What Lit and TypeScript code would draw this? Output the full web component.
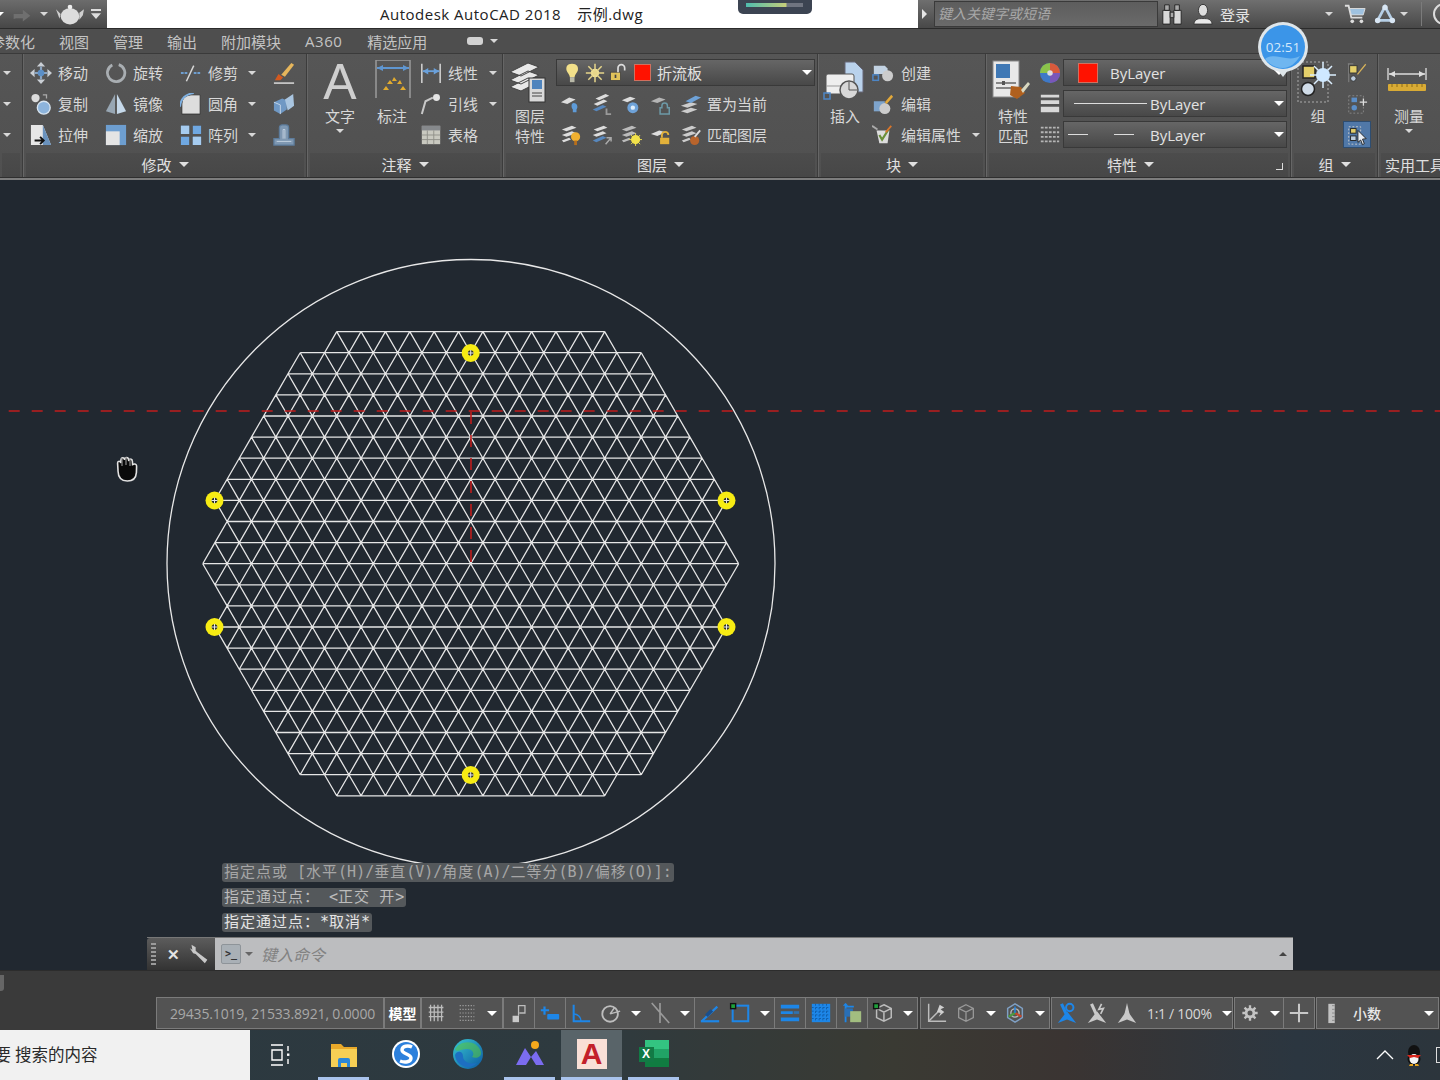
import { LitElement, css, html, svg, nothing } from 'lit';
import { customElement } from 'lit/decorators.js';

const B = '#1d86e8';

// small ribbon and status icons, 24x24
const ICONS: Record<string, unknown> = {
  move: svg`<path d="M12 0l4.500 5h-9zM12 24l-4.500-5h9zM0 12l5-4.500v9zM24 12l-5 4.500v-9z" fill="#c9ced4"/><path d="M12 5v14M5 12h14" stroke="#8aa4c0" stroke-width="2.400"/><circle cx="12" cy="12" r="3.600" fill="#5b8fc7"/>`,
  rotate: svg`<path d="M15 2.800A9.500 9.500 0 1 1 8 3.300" fill="none" stroke="#a9aeb2" stroke-width="3"/>`,
  trim: svg`<path d="M1 12h8M15 12h8" stroke="#6f9fd0" stroke-width="2" stroke-dasharray="3 1"/><path d="M7 21L15 4" stroke="#d8d8d8" stroke-width="1.600"/>`,
  brush: svg`<path d="M9 14L20 1l3 2-10 13z" fill="#e6b65c"/><path d="M6 13l5 4-3 3H2z" fill="#d3591f"/><path d="M1 23h22" stroke="#ddd" stroke-width="1.600"/>`,
  copy: svg`<circle cx="6" cy="5.500" r="4.500" fill="#dcdcdc"/><path d="M14 2h4v4" fill="none" stroke="#aaa" stroke-width="1.400"/><circle cx="15" cy="16" r="7" fill="#8db4dc" stroke="#d8e4ef" stroke-width="1.500"/>`,
  mirror: svg`<path d="M11 1L1 20l10 3z" fill="#98a7b4"/><path d="M13 1l10 19-10 3z" fill="#c6d9ea"/>`,
  fillet: svg`<path d="M2 23V12Q2 3 12 2h10v21z" fill="#ddd" stroke="#333" stroke-width="1"/><path d="M0 15Q1 2 15 0" fill="none" stroke="#7fb0e0" stroke-width="2.200"/>`,
  solid: svg`<path d="M1 10l9-4 5 2v10l-7 5-7-4z" fill="#6f98c4"/><path d="M13 7l9-6 1 13-7 5z" fill="#a9c5e0"/><path d="M1 10l7 3v10" stroke="#c7d8e8" fill="none"/>`,
  stretch: svg`<path d="M1 1h13l9 22H1z" fill="#e6e6e6"/><path d="M14 1l9 22h-9z" fill="#6a92bd"/><path d="M5 18h10M11 14l4 4-4 4" stroke="#111" stroke-width="2" fill="none"/>`,
  scale: svg`<rect x="1" y="1" width="22" height="22" fill="#6d9ed0"/><rect x="1" y="8" width="15" height="15" fill="#e4e4e4"/>`,
  array: svg`<path d="M1 2h9v9H1zM14 2h9v9h-9zM1 14h9v9H1zM14 14h9v9h-9z" fill="#6fa8e2"/><path d="M1 2h9v9H1zM14 14h9v9h-9z" fill="#a6ccf0"/>`,
  offset: svg`<path d="M1 23v-7h6V4a3 3 0 0 1 3-3h4a3 3 0 0 1 3 3v12h6v7z" fill="#7f98b2" stroke="#5d7c9c" stroke-width="1.400"/><path d="M4 19h16M11 16V6h2v10" stroke="#c6d4e2" fill="none"/>`,
  dim: svg`<path d="M2 2v21M22 2v21" stroke="#d8d8d8" stroke-width="1.600"/><path d="M3 10h18" stroke="#6aa0da" stroke-width="2"/><path d="M3 10l6-3.500v7zM21 10l-6-3.500v7z" fill="#6aa0da"/>`,
  leader: svg`<path d="M2 23l4-14 8-4" stroke="#c8c8c8" stroke-width="2.200" fill="none"/><circle cx="18" cy="5" r="3.800" fill="#e5e5e5"/>`,
  table: svg`<rect x="2" y="2" width="20" height="20" fill="#c9c9c0"/><rect x="2" y="2" width="20" height="5" fill="#86898c"/><path d="M2 12h20M2 17h20M8 7v15M15 7v15" stroke="#8f8f88"/>`,
  l1: svg`<path d="M1 10l9-5 7 2-9 5z" fill="#ddd"/><path d="M15 11c4 0 5 5 3 7v3h-4v-3c-2-2-2-7 1-7z" fill="#5e9bd8"/>`,
  l2: svg`<path d="M6 6l11-5 4 2-11 5zM4 12l11-5 4 2-11 5z" fill="#ddd"/><path d="M3 18l11-5 4 2-11 5z" fill="#5787bd"/><path d="M18 17v6h5" stroke="#999" stroke-width="2" fill="none"/>`,
  l3: svg`<path d="M2 8l9-4 6 2-9 4z" fill="#ddd"/><circle cx="14" cy="16" r="6" fill="#6ea2d8"/><circle cx="14" cy="16" r="2.400" fill="#dfeefb"/>`,
  l4: svg`<path d="M1 9l9-4 7 2-9 4z" fill="#b5b5b5"/><path d="M13 14a3 3 0 0 1 6 0v2h2v7h-10v-7h2z" fill="none" stroke="#6d9aa8" stroke-width="1.600"/>`,
  l5: svg`<path d="M1 14l11-4 7 2-11 4zM1 20l11-4 7 2-11 4z" fill="#ccc"/><path d="M6 9l11-6 6 2-11 6z" fill="#6ea2d8"/>`,
  l6: svg`<path d="M2 6l11-4 5 2-11 4zM2 12l11-4 5 2-11 4zM2 18l8-3 2 2-8 3z" fill="#ddd"/><circle cx="17" cy="14" r="5" fill="#f0b030"/><path d="M15.500 18h3v5h-3z" fill="#b86f1c"/>`,
  l7: svg`<path d="M4 6l11-4 4 2-11 4zM3 12l11-4 4 2-11 4z" fill="#ddd"/><path d="M3 18l11-5 4 2-11 5z" fill="#5787bd"/><path d="M23 15l-6 7M18 15h5v4" stroke="#aaa" stroke-width="1.600" fill="none"/>`,
  l8: svg`<path d="M2 6l11-4 5 2-11 4zM2 12l11-4 5 2-11 4zM2 18l8-3 2 2-8 3z" fill="#bbb"/><circle cx="17" cy="17" r="5" fill="#f2e24a"/><path d="M17 10v14M10 17h14M12 12l10 10M22 12L12 22" stroke="#f2e24a"/>`,
  l9: svg`<path d="M1 11l9-4 7 2-9 4z" fill="#ddd"/><rect x="11" y="15" width="10" height="7" fill="#e2b13a"/><path d="M13 15v-3a3 3 0 0 1 7 0" fill="none" stroke="#e2b13a" stroke-width="2"/>`,
  l10: svg`<path d="M2 6l11-4 5 2-11 4zM2 12l11-4 5 2-11 4zM2 18l8-3 2 2-8 3z" fill="#ccc"/><circle cx="16" cy="18" r="5" fill="#b8642c"/><path d="M16 14l6-7" stroke="#ddd" stroke-width="2"/>`,
  create: svg`<path d="M2 4h12l3 3v6H2z" fill="#c2d2e2"/><circle cx="17" cy="15" r="6" fill="#ccc"/><rect x="1" y="14" width="6" height="6" fill="none" stroke="#4d86c6" stroke-width="1.600"/>`,
  edit: svg`<path d="M2 9h12v11H2z" fill="#7ea4cc"/><circle cx="14" cy="17" r="6" fill="#ccc"/><path d="M14 10l7-8 2 2-7 8z" fill="#e3a93a"/>`,
  attr: svg`<path d="M5 7h14l-2 14H8z" fill="#ddd"/><path d="M8 12l3 5 7-11" stroke="#6a8f3a" stroke-width="2.400" fill="none"/><path d="M0 2l6 4" stroke="#aaa" stroke-width="2"/><path d="M15 9l6-7" stroke="#d8762b" stroke-width="2"/>`,
  wheel: svg`<circle cx="12" cy="12" r="11" fill="#3f79c7"/><path d="M12 12V1A11 11 0 0 1 23 12z" fill="#d85a3b"/><path d="M12 12H23A11 11 0 0 1 12 23z" fill="#7a57b8"/><path d="M12 12H1A11 11 0 0 1 12 1z" fill="#8bc24a"/><circle cx="12" cy="12" r="3" fill="#ddd"/>`,
  weight: svg`<path d="M2 2h20v3H2zM2 8h20v4H2zM2 15h20v6H2z" fill="#d8d8d8"/>`,
  ltype: svg`<path d="M2 4h20M2 9h20M2 14h20M2 19h20" stroke="#b5b5b5" stroke-width="2" stroke-dasharray="3 1.400"/>`,
  g1: svg`<path d="M2 2h6M3 2v20" stroke="#888" fill="none"/><rect x="4" y="4" width="8" height="8" fill="#e4cf6a" stroke="#333"/><circle cx="8" cy="18" r="3" fill="#bcd" stroke="#333"/><path d="M12 13L21 2l1 1-9 11z" fill="#d9b45a"/>`,
  g2: svg`<rect x="3" y="3" width="16" height="19" fill="none" stroke="#888" stroke-dasharray="2 2"/><rect x="6" y="5" width="6" height="5" fill="#5b8ec8"/><circle cx="9" cy="16" r="3" fill="#5b8ec8"/><path d="M15 10h8M19 6v8" stroke="#ddd" stroke-width="1.400"/>`,
  g3: svg`<rect x="3" y="3" width="13" height="19" fill="none" stroke="#ccc" stroke-dasharray="2 2"/><rect x="5" y="5" width="6" height="5" fill="#e4cf6a" stroke="#222"/><rect x="5" y="13" width="6" height="5" fill="#bcd" stroke="#222"/><path d="M13 7l9 9-4 .5 2 5-2 1-2-5-3 2.500z" fill="#e9eef4" stroke="#222"/>`,
  grid: svg`<path d="M5 3v18M9 3v18M13 3v18M17 3v18M3 6h16M3 11h16M3 16h16" stroke="#bcbcbc" stroke-width="1.400"/>`,
  snap: svg`<path d="M4 4h16M4 8h16M4 12h16M4 16h16M4 20h16" stroke="#9c9c9c" stroke-width="1.300" stroke-dasharray="1.400 1.600"/>`,
  note: svg`<rect x="5" y="15" width="7" height="7" fill="#c9c9c9"/><path d="M11.500 15V4h7v8h-6" fill="none" stroke="#bdbdbd" stroke-width="1.400"/>`,
  plusbar: svg`<path d="M6 5v9M2 9h9" stroke="${B}" stroke-width="2.400"/><rect x="9" y="13" width="13" height="6" rx="1" fill="${B}"/>`,
  ortho: svg`<path d="M4 3v18h18" stroke="${B}" stroke-width="2.200" fill="none"/><path d="M4 13a8 8 0 0 1 8 8" stroke="${B}" stroke-width="1.600" fill="none"/>`,
  polar: svg`<circle cx="11" cy="13" r="8.500" stroke="#bdbdbd" stroke-width="2" fill="none"/><path d="M11 13l11-3M11 13L16 6" stroke="#bdbdbd" stroke-width="1.600"/>`,
  cross: svg`<path d="M3 1l19 22M12 1v22" stroke="#9a9a9a" stroke-width="1.800"/>`,
  angle: svg`<path d="M2 21h20" stroke="${B}" stroke-width="2.400"/><path d="M3 21L20 5" stroke="${B}" stroke-width="2.400"/><path d="M8 15l6-6" stroke="#1a4f8c" stroke-width="4"/>`,
  osquare: svg`<rect x="4" y="4" width="17" height="17" fill="none" stroke="${B}" stroke-width="2.200"/><rect x="1" y="1" width="7" height="7" fill="#111"/><rect x="2.500" y="2.500" width="4" height="4" fill="#1ea03a"/>`,
  lines: svg`<path d="M2 3h20v4H2zM2 10h13v3H2zM2 17h20v4H2z" fill="${B}"/><path d="M16 10h6v3h-6z" fill="${B}" opacity=".6"/>`,
  hatch: svg`<rect x="2" y="2" width="20" height="20" fill="${B}"/><path d="M2 6h20M2 10h20M2 14h20M2 18h20M6 2v20M10 2v20M14 2v20M18 2v20" stroke="#0f5ca8" stroke-dasharray="2 2"/>`,
  sel: svg`<path d="M5 2v20M5 5h9" stroke="${B}" stroke-width="2"/><path d="M2 4l3-3 3 3" fill="${B}"/><rect x="4" y="7" width="9" height="9" fill="#2a6fb5"/><rect x="10" y="10" width="12" height="12" fill="#a2bd80"/>`,
  cube: svg`<path d="M13 3l8 4v10l-8 4-8-4V7zM5 7l8 4 8-4M13 11v10" fill="none" stroke="#bdbdbd" stroke-width="1.600"/><rect x="1" y="1" width="7" height="7" fill="#111"/><rect x="2.500" y="2.500" width="4" height="4" fill="#1ea03a"/>`,
  ducs: svg`<path d="M4 2v19h19" stroke="#bcbcbc" stroke-width="1.600" fill="none"/><path d="M4 21L16 9" stroke="#bcbcbc" stroke-width="1.600"/><path d="M16 3l5 3-4 2 4 3-6 5 2-4-4-1z" fill="#cfcfcf"/>`,
  cube2: svg`<path d="M12 3l8 4v10l-8 4-8-4V7zM4 7l8 4 8-4M12 11v10" fill="none" stroke="#999" stroke-width="1.400"/>`,
  gizmo: svg`<path d="M12 2l8 5v10l-8 5-8-5V7z" fill="none" stroke="#7fa0c4" stroke-width="1.600"/><circle cx="12" cy="12" r="4.500" fill="none" stroke="#bbb" stroke-width="1.500"/><path d="M12 12l7 4" stroke="#c8462c" stroke-width="2.400"/><path d="M12 12l-7 4" stroke="#4c9a3f" stroke-width="2.400"/><path d="M12 12V5" stroke="${B}" stroke-width="1.600"/>`,
  scale1: svg`<path d="M12 10L2 23l10-4 10 4z" fill="${B}"/><path d="M11 13L6 2" stroke="${B}" stroke-width="3.400"/><circle cx="15" cy="6" r="4" fill="none" stroke="${B}" stroke-width="2.200"/>`,
  scale2: svg`<path d="M12 10L2 23l10-4 10 4z" fill="#c9c9c9"/><path d="M11 13L6 2" stroke="#c9c9c9" stroke-width="3.400"/><path d="M17 2l-3 6 5-1-3 6" stroke="#c9c9c9" stroke-width="1.800" fill="none"/>`,
  scale3: svg`<path d="M12 9L2 23l10-4 10 4z" fill="#c9c9c9"/><path d="M12 1l-3 13h6z" fill="#c9c9c9"/>`,
  gear: svg`<g transform="translate(12 12) scale(.76) translate(-12 -12)"><circle cx="12" cy="12" r="5.600" fill="none" stroke="#c4c4c4" stroke-width="4"/><path d="M12 1v5M12 18v5M1 12h5M18 12h5M4.200 4.200l3.600 3.600M16.200 16.200l3.600 3.600M4.200 19.800l3.600-3.600M16.200 7.800l3.600-3.600" stroke="#c4c4c4" stroke-width="3.400"/></g>`,
  plus: svg`<path d="M12 2v20M2 12h20" stroke="#c8c8c8" stroke-width="2.200"/>`,
  ruler: svg`<rect x="8" y="2" width="7" height="21" fill="#c2c2c2"/><path d="M12 4h3M12 8h3M12 12h3M12 16h3M12 20h3" stroke="#888"/>`,
  bulb: svg`<path d="M12 1c6 0 8 4 7 8-.7 2.500-3.500 4.500-4 8H9.500c-.5-3.500-3.300-5.500-4-8-1-4 .5-8 6.500-8z" fill="#f2e08a"/><rect x="9.500" y="17" width="5.500" height="6" fill="#b9b9a8"/>`,
  sun: svg`<circle cx="12" cy="12" r="5" fill="#f4e6a0"/><path d="M12 1v22M1 12h22M4 4l16 16M20 4L4 20" stroke="#e7d68a" stroke-width="1.800"/>`,
  unlock: svg`<rect x="3" y="11" width="12" height="10" fill="#e0c25a" stroke="#444"/><rect x="8" y="14" width="2" height="4" fill="#444"/><path d="M12 11V6a4 4 0 0 1 8 0v3" fill="none" stroke="#ddd" stroke-width="2"/>`,
  binoc: svg`<path d="M2 8h8v15H2zM14 8h8v15h-8z" fill="#d8d8d8" stroke="#222"/><path d="M4 2h5v6H4zM15 2h5v6h-5zM10 10h4v6h-4z" fill="#a8a8a8" stroke="#222"/>`,
  user: svg`<ellipse cx="12" cy="8" rx="5" ry="6.500" fill="#ddd" stroke="#333"/><path d="M2 23c1-6 5-6 10-6s9 0 10 6z" fill="#e9e9e9" stroke="#333"/>`,
  cart: svg`<path d="M1 3h4l3 13h12" fill="none" stroke="#ddd" stroke-width="2"/><path d="M6 6h17l-2 7H8z" fill="#9fc2e0" stroke="#ddd"/><circle cx="9" cy="20" r="2" fill="#ddd"/><circle cx="19" cy="20" r="2" fill="#ddd"/>`,
  a360: svg`<path d="M12 4L4 19h16z" fill="none" stroke="#b6cfe6" stroke-width="3"/><circle cx="12" cy="5" r="3" fill="#d8e6f4"/><circle cx="4" cy="19" r="3" fill="#d8e6f4"/><circle cx="20" cy="19" r="3" fill="#d8e6f4"/>`,
  teapot: svg`<ellipse cx="12" cy="14" rx="8" ry="7" fill="#dcdcdc"/><path d="M4 12L0 8l3 8zM20 11l4-3-1 5-3 4z" fill="#cfcfcf"/><circle cx="12" cy="6" r="2" fill="#eee"/>`,
  qatmore: svg`<path d="M6 6h12v2.400H6zM6 11h12l-6 7z" fill="#ddd"/>`,
  redo: svg`<path d="M2 18v-6h11V7l9 7-9 7v-4H5z" fill="#6f6f6f"/>`,
  wrench: svg`<path d="M3 1l5 3v4l2 2 12 9-3 4-11-11-3-1-4-6 3 2z" fill="#c8c8c8"/>`,
};

// large ribbon icons, 44x44
const BIG: Record<string, unknown> = {
  dimbig: svg`<g transform="translate(4 -1)"><path d="M2 1h34M2 1v38M36 1v38" stroke="#9a9a9a" stroke-width="1.500" fill="none"/><path d="M3 9h32" stroke="#5f96d0" stroke-width="2"/><path d="M3 9l6-3v6zM35 9l-6-3v6z" fill="#5f96d0"/><path d="M9 31l3-4 3 4zM13 25l3-4 3 4zM18 22l2-4 3 4zM23 25l3-4 2 4zM26 31l3-4 3 4z" fill="#e1ab2f"/></g>`,
  layers: svg`<path d="M2 12L20 3l11 4-18 9zM2 20l18-9 11 4-18 9zM2 27l18-9 11 4-18 9z" fill="#e8e8e8" stroke="#444"/><rect x="21" y="18" width="16" height="24" fill="#d9d9d9" stroke="#333"/><rect x="24" y="20" width="10" height="9" fill="#4f84bd"/><path d="M24 33h10M24 36h10" stroke="#444"/>`,
  insert: svg`<path d="M22 2h10l8 8v22H22z" fill="#b9d2ec" stroke="#667"/><rect x="3" y="14" width="28" height="20" rx="2" fill="#eee" stroke="#555"/><path d="M3 26h28" stroke="#999"/><circle cx="26" cy="30" r="9" fill="#d8d8d8" stroke="#555" stroke-width="1.500"/><path d="M26 30V22M26 30h8" stroke="#555"/><rect x="1" y="33" width="6" height="6" fill="none" stroke="#4d86c6" stroke-width="1.500"/>`,
  match: svg`<rect x="2" y="1" width="26" height="36" fill="#e8e8e8" stroke="#888"/><rect x="5" y="4" width="14" height="14" fill="#3f78b5"/><path d="M5 23h20M5 28h20" stroke="#666" stroke-width="1.500"/><rect x="11" y="21" width="3" height="4" fill="#555"/><path d="M20 26l10 1 4 6-8 6-7-4z" fill="#b0601e"/><path d="M30 30l7-8 2 2-7 9z" fill="#d8d8c0"/>`,
  group: svg`<rect x="2" y="2" width="30" height="40" fill="none" stroke="#aaa" stroke-dasharray="2 2"/><rect x="7" y="6" width="12" height="12" fill="#e4cf6a" stroke="#222" stroke-width="1.500"/><circle cx="12" cy="29" r="6.500" fill="#d0dce8" stroke="#222" stroke-width="1.500"/><path d="M27 2v26M14 15h26M18 6l18 18M36 6L18 24" stroke="#dcefff" stroke-width="1.500"/><circle cx="27" cy="15" r="7" fill="#cfe8ff"/>`,
  measure: svg`<path d="M1 8v12M39 8v12" stroke="#ccc" stroke-width="1.500"/><path d="M2 14h36" stroke="#ddd" stroke-width="1.500"/><path d="M2 14l6-3v6zM38 14l-6-3v6z" fill="#ddd"/><rect x="1" y="24" width="38" height="7" rx="1" fill="#d9ab35"/><path d="M5 24v3M10 24v3M15 24v3M20 24v3M25 24v3M30 24v3M35 24v3" stroke="#8c6c18"/>`,
};

const ico = (n: string, s = 22) =>
  html`<svg class="ico" width=${s} height=${s} viewBox="0 0 24 24">${ICONS[n]}</svg>`;
const big = (n: string, w = 44) =>
  html`<svg class="ico" width=${w} height="44" viewBox="0 0 44 44">${BIG[n]}</svg>`;
const caret = html`<i class="caret"></i>`;

// ribbon row: icon, label and an optional caret
const tool = (icon: string, label: string, drop = false) => html`
  <div class="tool">
    <span class="tool-ico">${ico(icon, 22)}</span>
    <span>${label}</span>
    ${drop ? html`<i class="caret drop"></i>` : nothing}
  </div>
`;

const panel = (name: string, title: unknown, body: unknown, foot: unknown = nothing) => html`
  <section class="panel ${name}">
    <div class="body">${body}</div>
    <footer>${title}${caret}${foot}</footer>
  </section>
`;

// command text: CJK is wider than the DejaVu glyph cell in the reference font
const mono = (text: string) =>
  text.split(/([\u4e00-\u9fff\uff1a]+)/).map((part, i) =>
    i % 2 ? html`<span class="cjk">${part}</span>` : part);

// the plate: half-widths per row, in units of half a triangle side
const HALF = [11, 14, 15, 16, 17, 18, 19, 20, 21, 20, 21, 22, 21, 20, 21, 20, 19, 18, 17, 16, 15, 14, 11];
const CX = 470.7;
const UNIT = 12.18;
const TOP = 331.6;
const ROW = 21.1;

const platePath = () => {
  let d = '';
  HALF.forEach((h, r) => {
    const y = TOP + r * ROW;
    d += `M${CX - h * UNIT} ${y}H${CX + h * UNIT}`;
    const next = HALF[r + 1];
    if (next === undefined) return;
    for (let k = -h; k <= h; k += 2) {
      for (const s of [-1, 1]) {
        if (Math.abs(k + s) <= next) {
          d += `M${CX + k * UNIT} ${y}L${CX + (k + s) * UNIT} ${y + ROW}`;
        }
      }
    }
  });
  return d;
};

const GRIPS = [
  [470.7, 353], [214.5, 500.5], [726.5, 500.5], [214.5, 627], [726.5, 627], [470.7, 775],
];

const cell = (icon: string) => html`<span class="cell">${ico(icon, 22)}</span>`;
const cdrop = html`<span class="cdrop"><i class="caret white"></i></span>`;

// status bar groups, with their left and right edges on the bar
const SEGMENTS: { from: number; to: number; body: unknown }[] = [
  { from: 156, to: 383, body: html`<span class="coords">29435.1019, 21533.8921, 0.0000</span>` },
  { from: 384, to: 420, body: html`<span class="model">模型</span>` },
  { from: 421, to: 502, body: html`${cell('grid')}${cell('snap')}${cdrop}` },
  { from: 503, to: 534, body: cell('note') },
  { from: 534, to: 565, body: cell('plusbar') },
  { from: 565, to: 694, body: html`${cell('ortho')}${cell('polar')}${cdrop}${cell('cross')}${cdrop}` },
  { from: 694, to: 774, body: html`${cell('angle')}${cell('osquare')}${cdrop}` },
  { from: 774, to: 805, body: cell('lines') },
  { from: 805, to: 836, body: cell('hatch') },
  { from: 836, to: 867, body: cell('sel') },
  { from: 867, to: 917, body: html`${cell('cube')}${cdrop}` },
  { from: 920, to: 1049, body: html`${cell('ducs')}${cell('cube2')}${cdrop}${cell('gizmo')}${cdrop}` },
  { from: 1051, to: 1232, body: html`${cell('scale1')}${cell('scale2')}${cell('scale3')}<span class="zoom">1:1 / 100%</span>${cdrop}` },
  { from: 1234, to: 1283, body: html`${cell('gear')}${cdrop}` },
  { from: 1283, to: 1314, body: cell('plus') },
  { from: 1316, to: 1438, body: html`${cell('ruler')}<span class="units">小数</span><i class="caret white end"></i>` },
];

@customElement('app-root')
export class AppRoot extends LitElement {
  render() {
    return html`
      <header class="title">
        <div class="qat">
          <i class="caret white"></i>
          ${ico('redo', 20)}
          <i class="caret"></i>
          ${ico('teapot', 28)}
          <span class="qat-more">${ico('qatmore', 20)}</span>
        </div>
        <div class="caption">
          <span class="doc">Autodesk AutoCAD 2018<i class="doc-gap"></i>示例.dwg</span>
          <span class="meter"><i></i></span>
        </div>
        <div class="infocenter">
          <span class="expand"></span>
          <span class="search">键入关键字或短语</span>
          <span class="ic binoc">${ico('binoc', 22)}</span>
          <span class="ic user">${ico('user', 22)}</span>
          <span class="login">登录</span>
          <i class="caret login-drop"></i>
          <span class="ic cart">${ico('cart', 22)}</span>
          <span class="ic a360">${ico('a360', 22)}</span>
          <i class="caret a360-drop"></i>
          <span class="divider"></span>
          <span class="help"></span>
        </div>
      </header>

      <nav class="tabs">
        <span class="cut">参数化</span>
        <span>视图</span>
        <span>管理</span>
        <span>输出</span>
        <span>附加模块</span>
        <span class="latin">A360</span>
        <span>精选应用</span>
        <span class="tab-opt"><i class="pill"></i><i class="caret"></i></span>
      </nav>

      <div class="ribbon">
        <section class="panel stub">
          <div class="body"><i class="caret"></i><i class="caret"></i><i class="caret"></i></div>
          <footer></footer>
        </section>

        ${panel('modify', '修改', html`
          <div class="tools">
            ${tool('move', '移动')}${tool('rotate', '旋转')}${tool('trim', '修剪', true)}${ico('brush')}
            ${tool('copy', '复制')}${tool('mirror', '镜像')}${tool('fillet', '圆角', true)}${ico('solid')}
            ${tool('stretch', '拉伸')}${tool('scale', '缩放')}${tool('array', '阵列', true)}${ico('offset')}
          </div>
        `)}

        ${panel('annot', '注释', html`
          <div class="big">
            <span class="big-ico glyph-a">A</span>
            <span>文字</span>${caret}
          </div>
          <div class="big">
            <span class="big-ico">${big('dimbig')}</span>
            <span>标注</span>
          </div>
          <div class="stack">
            ${tool('dim', '线性', true)}${tool('leader', '引线', true)}${tool('table', '表格')}
          </div>
        `)}

        ${panel('layer', '图层', html`
          <div class="big">
            <span class="big-ico">${big('layers')}</span>
            <span>图层</span><span>特性</span>
          </div>
          <div class="layer-col">
            <div class="combo">
              ${ico('bulb', 20)}${ico('sun', 20)}${ico('unlock', 20)}
              <i class="swatch"></i>
              <span>折流板</span>
              <i class="caret white end"></i>
            </div>
            <div class="irow">
              ${['l1', 'l2', 'l3', 'l4', 'l5'].map((n) => html`<span class="icell">${ico(n, 22)}</span>`)}
              <span>置为当前</span>
            </div>
            <div class="irow">
              ${['l6', 'l7', 'l8', 'l9', 'l10'].map((n) => html`<span class="icell">${ico(n, 22)}</span>`)}
              <span>匹配图层</span>
            </div>
          </div>
        `)}

        ${panel('block', '块', html`
          <div class="big">
            <span class="big-ico">${big('insert')}</span>
            <span>插入</span>
          </div>
          <div class="stack">
            ${tool('create', '创建')}${tool('edit', '编辑')}${tool('attr', '编辑属性', true)}
          </div>
        `)}

        ${panel('props', '特性', html`
          <div class="big">
            <span class="big-ico">${big('match')}</span>
            <span>特性</span><span>匹配</span>
          </div>
          <div class="prop-icons">${ico('wheel', 22)}${ico('weight', 22)}${ico('ltype', 22)}</div>
          <div class="prop-combos">
            <div class="combo"><i class="swatch wide"></i><span>ByLayer</span><i class="caret white end"></i></div>
            <div class="combo"><i class="lw"></i><span>ByLayer</span><i class="caret white end"></i></div>
            <div class="combo"><i class="lt first"></i><i class="lt gap"></i><span class="lt-label">ByLayer</span><i class="caret white end"></i></div>
          </div>
        `, html`<i class="launcher"></i>`)}

        ${panel('groups', '组', html`
          <div class="big">
            <span class="big-ico">${big('group')}</span>
            <span>组</span>
          </div>
          <div class="group-col">
            <span class="gcell">${ico('g1', 22)}</span>
            <span class="gcell">${ico('g2', 22)}</span>
            <span class="gcell on">${ico('g3', 22)}</span>
          </div>
        `)}

        <section class="panel util">
          <div class="body">
            <div class="big">
              <span class="big-ico">${big('measure')}</span>
              <span>测量</span>${caret}
            </div>
          </div>
          <footer>实用工具</footer>
        </section>
      </div>
      <div class="ribbon-edge"></div>

      <main class="canvas">
        <svg class="drawing" width="1440" height="790" viewBox="0 180 1440 790">
          <circle cx="471" cy="563.5" r="304" fill="none" stroke="#e8e8e8" stroke-width="1.300"/>
          <path d=${platePath()} fill="none" stroke="#e6e6e6" stroke-width="1.300"/>
          <path d="M8.700 411H1440" stroke="#c01c1c" stroke-width="1.600" stroke-dasharray="11 12"/>
          <path d="M471 412V565" stroke="#c01c1c" stroke-width="1.600" stroke-dasharray="12 11"/>
          ${GRIPS.map(([x, y]) => svg`
            <circle cx=${x} cy=${y} r="9" fill="#f7ec13"/>
            <circle cx=${x} cy=${y} r="2.800" fill="#2a2e2a"/>
            <path d="M${x - 3} ${y}h6M${x} ${y - 3}v6" stroke="#e8e8e8"/>
          `)}
          <path d="M118 470l-.4-7c0-2.400 2.800-2.400 3.200 0l.2-3c.2-3 3.400-3 3.600 0c.2-3.400 3.800-3.400 4 0l.2 1c.4-2.800 3.600-2.400 3.600.6l.2 3l1.600-.6c1.800-.2 2.400 1 2.400 2.600l-.2 6c-.4 5.400-3.400 8.400-9 8.400c-5.600 0-9.200-3.600-9.400-10z" fill="#0a0a0a" stroke="#e2e2e2" stroke-width="1.600"/>
          <path d="M122 458v8M126 457v8M130 458v8" stroke="#8d8d8d" stroke-width="1.200"/>
        </svg>

        <div class="history">
          <p class="h1">${mono('指定点或 [水平(H)/垂直(V)/角度(A)/二等分(B)/偏移(O)]:')}</p>
          <p class="h2">${mono('指定通过点： <正交 开>')}</p>
          <p class="h3">${mono('指定通过点：*取消*')}</p>
        </div>

        <div class="cmdbar">
          <div class="cmd-tools">
            <i class="grab"></i>
            <span class="close">✕</span>
            <span class="wrench">${ico('wrench', 20)}</span>
          </div>
          <div class="cmd-input">
            <span class="prompt">&gt;_</span>
            <i class="caret dim"></i>
            <span class="placeholder">键入命令</span>
            <i class="up"></i>
          </div>
        </div>
      </main>

      <div class="status">
        <i class="model-tab"></i>
        <div class="segments">
          ${SEGMENTS.map((s, i) => {
            const prev = i ? SEGMENTS[i - 1].to : s.from - 1;
            return html`
              <div class="seg" style="width:${s.to - s.from + 1}px;margin-left:${s.from - prev - 1}px">${s.body}</div>
            `;
          })}
        </div>
      </div>

      <footer class="taskbar">
        <div class="tsearch"><i class="lead">要</i>搜索的内容</div>
        <span class="tview">
          <svg width="22" height="22" viewBox="0 0 22 22"><path d="M2 1h12M2 21h12M3 6h10v10H3zM19 2v5M19 15v5" fill="none" stroke="#fff" stroke-width="1.400"/><rect x="18" y="9.500" width="2.400" height="2.400" fill="#fff"/></svg>
        </span>
        <span class="task run">
          <svg width="30" height="30" viewBox="0 0 30 30"><path d="M2 5h10l3 3h13v20H2z" fill="#e9a92a"/><path d="M2 10h26v18H2z" fill="#f7cf54"/><path d="M9 28v-7a2 2 0 0 1 2-2h8a2 2 0 0 1 2 2v7z" fill="#2b87d8"/><rect x="12" y="24" width="6" height="4" fill="#f7cf54"/></svg>
        </span>
        <span class="task">
          <svg width="30" height="30" viewBox="0 0 30 30"><circle cx="15" cy="15" r="14" fill="#fff"/><circle cx="15" cy="15" r="12" fill="#2c80dc"/><path d="M21 8c-4-2-10-1-10 3s9 4 9 8-6 5-11 3" fill="none" stroke="#fff" stroke-width="3.400"/></svg>
        </span>
        <span class="task">
          <svg width="32" height="32" viewBox="0 0 32 32"><defs><linearGradient id="edge" x1="0" y1="0" x2="1" y2="1"><stop offset="0" stop-color="#37c6d0"/><stop offset="1" stop-color="#0c59a4"/></linearGradient></defs><circle cx="16" cy="16" r="15" fill="url(#edge)"/><path d="M3 12C7 2 25 1 29 14c1 5-5 7-9 5 3-3 1-8-5-8-5 0-9 3-12 1z" fill="#59c73d" opacity=".55"/><path d="M11 18c0 6 7 9 14 7-8 8-21 3-22-8 2-5 8-4 8 1z" fill="#1d6fc2"/></svg>
        </span>
        <span class="task run">
          <svg width="30" height="30" viewBox="0 0 30 30"><path d="M1 26L10 9l6 9 5-6 8 14h-8l-5-8-5 8z" fill="#7b6cf0"/><circle cx="20" cy="6" r="4" fill="#f5a81c"/></svg>
        </span>
        <span class="task run active"><span class="acad">A</span></span>
        <span class="task run">
          <span class="xl"><i></i><b>X</b></span>
        </span>
        <span class="tray-space"></span>
        <svg class="chev" width="18" height="12" viewBox="0 0 18 12"><path d="M1 10l8-8 8 8" fill="none" stroke="#fff" stroke-width="1.300"/></svg>
        <svg class="qq" width="18" height="22" viewBox="0 0 18 22"><ellipse cx="9" cy="8" rx="6" ry="7" fill="#111"/><ellipse cx="9" cy="15" rx="6.500" ry="6" fill="#111"/><ellipse cx="9" cy="15" rx="4.500" ry="5" fill="#f4f4f4"/><path d="M2 11h14l-3 3-4-1-4 1z" fill="#d8261c"/><path d="M5 20h3v2H4zM10 20h3l1 2h-4z" fill="#e4a11b"/></svg>
        <span class="tray-end"></span>
      </footer>

      <div class="timer">
        <svg width="52" height="58" viewBox="0 0 52 58">
          <path d="M20 48l6 8 6-8z" fill="#dfe6ea"/>
          <circle cx="26" cy="26" r="25" fill="#dfe6ea"/>
          <circle cx="26" cy="26" r="22" fill="#3b95e8"/>
          <path d="M8 38c7-5 14-2 21-1 6 1 10 0 14-2-4 7-10 12-17 12-8 0-14-4-18-9z" fill="#6fb6f0"/>
        </svg>
        <span>02:51</span>
      </div>
    `;
  }

  static styles = css`
    :host {
      position: relative;
      display: flex;
      flex-direction: column;
      width: 1440px;
      height: 1080px;
      overflow: hidden;
      font: 15px 'Open Sans', 'Noto Sans CJK SC', sans-serif;
      color: #d8d8d8;
      background: #212830;
    }

    .ico {
      display: block;
      flex: none;
    }

    .caret {
      display: inline-block;
      width: 0;
      height: 0;
      flex: none;
      border: 4px solid transparent;
      border-top: 4px solid #d8d8d8;
      border-bottom: 0;
    }

    .caret.white {
      border-top-color: #fff;
      border-width: 5px 5.500px 0;
    }

    .caret.dim {
      border-top-color: #666;
    }

    .caret.end {
      margin-left: auto;
    }

    /* title bar */
    .title {
      display: flex;
      height: 28px;
      flex: none;
      border-bottom: 1px solid #2b2b2b;
    }

    .qat {
      display: flex;
      align-items: center;
      gap: 8px;
      width: 113px;
      flex: none;
      margin-left: -6px;
      background: linear-gradient(#6c6c6c, #474747);
    }

    .qat-more {
      margin-left: -6px;
    }

    .caption {
      position: relative;
      width: 811px;
      flex: none;
      background: #fff;
      color: #222;
    }

    .doc {
      position: absolute;
      left: 273px;
      top: 4px;
      font-size: 15px;
      line-height: 20px;
      letter-spacing: 0.500px;
      white-space: nowrap;
    }

    .doc-gap {
      display: inline-block;
      width: 16px;
    }

    .meter {
      position: absolute;
      left: 631px;
      top: -4px;
      display: block;
      width: 74px;
      height: 18px;
      border-radius: 5px;
      background: #3c4452;
    }

    .meter i {
      position: absolute;
      left: 8px;
      top: 7px;
      width: 57px;
      height: 4px;
      background: linear-gradient(90deg, #4fbcae, #c5ce7a 70%, #6f7480 72%);
    }

    .infocenter {
      display: flex;
      align-items: center;
      flex: 1;
      white-space: nowrap;
      background: linear-gradient(#6f6f6f, #484848);
    }

    .expand {
      width: 0;
      height: 0;
      margin: 0 7px 0 4px;
      flex: none;
      border: 5px solid transparent;
      border-left: 5px solid #e5e5e5;
      border-right: 0;
    }

    .search {
      width: 224px;
      height: 26px;
      flex: none;
      padding-left: 3px;
      box-sizing: border-box;
      border: 1px solid #3a3a3a;
      background: linear-gradient(#5d5d5d, #6a6a6a);
      font-style: italic;
      font-size: 14px;
      line-height: 24px;
      color: #a8a8a8;
    }

    .ic {
      flex: none;
    }

    .binoc { margin-left: 3px; }
    .user { margin-left: 9px; }
    .cart { margin-left: 11px; }
    .a360 { margin-left: 8px; }
    .a360-drop { margin-left: 4px; }

    .login {
      margin-left: 6px;
      font-size: 15px;
      color: #e4e4e4;
    }

    .login-drop {
      margin-left: 75px;
    }

    .divider {
      width: 1px;
      height: 24px;
      flex: none;
      margin: 0 11px 0 13px;
      background: #7b7b7b;
    }

    .help {
      width: 18px;
      height: 18px;
      flex: none;
      border: 2px solid #ddd;
      border-radius: 50%;
    }

    /* ribbon tabs */
    .tabs {
      display: flex;
      align-items: center;
      gap: 24px;
      height: 25px;
      flex: none;
      padding-left: 2px;
      box-sizing: border-box;
      border-bottom: 1px solid #3a3a3a;
      background: #4e4e4e;
      font-size: 15px;
      color: #c4c4c4;
      white-space: nowrap;
    }

    .cut {
      margin-left: -12px;
    }

    .latin {
      margin-right: 1px;
      letter-spacing: 0.500px;
    }

    .tab-opt {
      display: flex;
      align-items: center;
      gap: 7px;
      margin-left: 16px;
    }

    .pill {
      display: block;
      width: 16px;
      height: 8px;
      border-radius: 3px;
      background: #d2d2d2;
    }

    /* ribbon */
    .ribbon {
      display: flex;
      height: 123px;
      flex: none;
      background: linear-gradient(#565656, #505050);
      overflow: hidden;
    }

    .ribbon-edge {
      height: 3px;
      flex: none;
      border-top: 1px solid #2f2f2f;
      box-sizing: border-box;
      background: #7d7d7d;
    }

    .panel {
      display: flex;
      flex-direction: column;
      flex: none;
      border-right: 1px solid #3c3c3c;
      box-shadow: 1px 0 0 #666;
      margin-right: 1px;
    }

    .panel .body {
      display: flex;
      height: 99px;
      box-sizing: border-box;
      padding-top: 3px;
    }

    .panel footer {
      position: relative;
      display: flex;
      align-items: center;
      justify-content: center;
      gap: 7px;
      flex: 1;
      margin: 0 2px;
      padding-bottom: 2px;
      background: linear-gradient(#4c4c4c, #474747);
      color: #e0e0e0;
      font-size: 15px;
    }

    .panel footer .caret {
      border-width: 5px 5.500px 0;
      border-top-color: #e0e0e0;
    }

    .stub { width: 22px; }
    .stub .body { flex-direction: column; align-items: flex-start; padding: 17px 0 0 3px; gap: 27px; }
    .modify { width: 282px; }
    .annot { width: 194px; }
    .layer { width: 313px; }
    .block { width: 166px; }
    .props { width: 303px; }
    .groups { width: 85px; }
    .util { width: 120px; border-right: 0; box-shadow: none; margin-right: 0; }
    .util footer { justify-content: flex-start; padding-left: 4px; white-space: nowrap; }
    .props footer { padding-right: 16px; }

    .tools {
      display: grid;
      grid-template-columns: 75px 75px 93px 24px;
      grid-auto-rows: 31px;
      align-items: center;
      padding-left: 6px;
    }

    .stack {
      display: grid;
      grid-auto-rows: 31px;
      align-items: center;
    }

    .tool {
      display: flex;
      align-items: center;
      white-space: nowrap;
    }

    .tool-ico {
      width: 22px;
      margin-right: 6px;
      flex: none;
    }

    .tool .drop {
      margin-left: 10px;
    }

    .big {
      display: flex;
      flex-direction: column;
      align-items: center;
      width: 50px;
      flex: none;
      line-height: 20px;
      white-space: nowrap;
    }

    .big .caret {
      margin-top: 3px;
    }

    .big-ico {
      display: block;
      height: 46px;
      margin-top: 3px;
    }

    .glyph-a {
      font: 50px/44px 'Liberation Sans', sans-serif;
      color: #cfcfcf;
    }

    .annot .body { padding-left: 7px; gap: 2px; }
    .annot .stack { margin-left: 1px; }
    .annot .tool .drop { margin-left: 11px; }

    .layer .big { width: 52px; }

    .layer-col {
      display: grid;
      grid-auto-rows: 31px;
      align-items: center;
      width: 259px;
    }

    .combo {
      display: flex;
      align-items: center;
      gap: 3px;
      height: 27px;
      padding: 0 2px 0 5px;
      box-sizing: border-box;
      border: 1px solid #393939;
      background: linear-gradient(#666, #484848);
      font-size: 15px;
      color: #e2e2e2;
    }

    .swatch {
      display: block;
      width: 17px;
      height: 17px;
      margin: 0 3px;
      flex: none;
      border: 1px solid #d0705f;
      box-sizing: border-box;
      background: #ff1200;
    }

    .swatch.wide {
      width: 20px;
      height: 20px;
      margin: 0 9px;
    }

    .irow {
      display: flex;
      align-items: center;
    }

    .icell {
      display: flex;
      justify-content: center;
      width: 30px;
      flex: none;
    }

    .icell:nth-of-type(5) { margin-right: 1px; }

    .block .body { gap: 2px; }
    .block .big { margin-left: 1px; }
    .block .tool-ico { margin-right: 7px; }
    .block .tool .drop { margin-left: 11px; }

    .props .big { margin-left: 1px; }

    .prop-icons {
      display: grid;
      grid-auto-rows: 31px;
      align-items: center;
      width: 24px;
      margin-left: 1px;
    }

    .prop-combos {
      display: grid;
      grid-auto-rows: 31px;
      align-items: center;
      width: 224px;
    }

    .lw {
      display: block;
      width: 73px;
      height: 1px;
      margin-left: 5px;
      background: #ddd;
      flex: none;
    }

    .lt {
      display: block;
      width: 20px;
      height: 1px;
      background: #ddd;
      flex: none;
    }

    .lt.first {
      margin-left: -1px;
    }

    .lt.gap {
      margin-left: 23px;
    }

    .lt-label {
      margin-left: 13px;
    }

    .launcher {
      position: absolute;
      right: 5px;
      bottom: 7px;
      width: 6px;
      height: 6px;
      border-right: 1.500px solid #ddd;
      border-bottom: 1.500px solid #ddd;
    }

    .groups .big { margin-left: 1px; }

    .group-col {
      display: grid;
      grid-auto-rows: 31px;
      align-items: center;
      width: 28px;
    }

    .gcell {
      display: flex;
      align-items: center;
      justify-content: center;
      height: 27px;
    }

    .gcell.on {
      background: #5078a8;
      border: 1px solid #2e4d70;
      box-sizing: border-box;
    }

    .util .big { width: 60px; }

    /* drawing area */
    .canvas {
      position: relative;
      height: 790px;
      flex: none;
      background: #212830;
    }

    .drawing {
      display: block;
    }

    .history {
      position: absolute;
      left: 222px;
      bottom: 38px;
      display: flex;
      flex-direction: column;
      align-items: flex-start;
      gap: 6px;
    }

    .history p {
      margin: 0;
      padding: 0 2px;
      height: 19px;
      border-radius: 3px;
      background: #54585b;
      font: 15px/19px 'DejaVu Sans Mono', 'Noto Sans CJK SC', monospace;
      white-space: pre;
    }

    .cjk {
      letter-spacing: 1px;
    }

    .h1 { color: #a6a6a6; }
    .h2 { color: #bcbcbc; }
    .h3 { color: #e4e4e4; }

    .cmdbar {
      position: absolute;
      left: 147px;
      right: 147px;
      bottom: 0;
      display: flex;
      height: 33px;
      border-top: 1px solid #777;
      box-sizing: border-box;
    }

    .cmd-tools {
      display: flex;
      align-items: center;
      width: 68px;
      flex: none;
      background: linear-gradient(#5c5c5c, #333);
      border-radius: 3px 0 0 0;
    }

    .grab {
      display: block;
      width: 5px;
      height: 22px;
      margin: 0 10px 0 4px;
      background: repeating-linear-gradient(#9a9a9a 0 2px, transparent 2px 4px);
    }

    .close {
      width: 14px;
      font-size: 15px;
      font-weight: 700;
      color: #e4e4e4;
      text-align: center;
    }

    .wrench {
      margin-left: 9px;
    }

    .cmd-input {
      position: relative;
      display: flex;
      align-items: center;
      flex: 1;
      padding-left: 6px;
      background: #bcbdbf;
    }

    .prompt {
      width: 18px;
      height: 18px;
      margin-right: 4px;
      border: 1px solid #8e9499;
      border-radius: 2px;
      background: #a9b0b6;
      font: 700 10px/18px 'DejaVu Sans Mono', monospace;
      color: #333;
      text-align: center;
    }

    .placeholder {
      margin-left: 8px;
      font-style: italic;
      font-size: 16px;
      color: #828282;
    }

    .up {
      position: absolute;
      right: 6px;
      top: 14px;
      width: 0;
      height: 0;
      border: 4.500px solid transparent;
      border-bottom: 4.500px solid #444;
      border-top: 0;
    }

    /* status bar */
    .status {
      position: relative;
      display: flex;
      align-items: flex-end;
      height: 60px;
      flex: none;
      padding-left: 156px;
      box-sizing: border-box;
      border-top: 1px solid #2c2c2c;
      background: #3a3a3a;
    }

    .model-tab {
      position: absolute;
      left: 0;
      top: 4px;
      width: 4px;
      height: 16px;
      border-radius: 0 0 3px 0;
      background: #666;
    }

    .segments {
      display: flex;
      height: 32px;
      margin-bottom: 1px;
    }

    .seg {
      display: flex;
      align-items: center;
      flex: none;
      height: 32px;
      box-sizing: border-box;
      border: 1px solid #7b7b7b;
      background: #535353;
      font-size: 14px;
      color: #d8d8d8;
      white-space: nowrap;
    }

    .coords {
      padding-left: 13px;
      color: #a8a8a8;
      letter-spacing: -0.150px;
    }

    .model {
      width: 100%;
      text-align: center;
      font-weight: 700;
      color: #fff;
    }

    .cell {
      display: flex;
      justify-content: center;
      width: 30px;
      flex: none;
    }

    .cdrop {
      display: flex;
      justify-content: center;
      width: 19px;
      flex: none;
    }

    .zoom {
      margin-left: 5px;
      width: 70px;
      flex: none;
      letter-spacing: -0.300px;
    }

    .units {
      margin-left: 6px;
      font-weight: 500;
      color: #e8e8e8;
    }

    .seg .end {
      margin-right: 4px;
    }

    /* task bar */
    .taskbar {
      display: flex;
      align-items: center;
      height: 50px;
      flex: none;
      background: linear-gradient(90deg, #2b3840, #2e3a3f 40%, #3a3a33 62%, #3a3432 74%, #2b3640 90%, #2c353c);
    }

    .tsearch {
      width: 250px;
      height: 50px;
      flex: none;
      overflow: hidden;
      background: #f1f1f1;
      color: #2a2a2a;
      font-size: 16.500px;
      line-height: 50px;
      white-space: nowrap;
    }

    .lead {
      display: inline-block;
      width: 16.500px;
      margin: 0 4px 0 -5.500px;
      font-style: normal;
    }

    .tview {
      display: flex;
      justify-content: center;
      width: 60px;
      margin-right: 8px;
      flex: none;
    }

    .task {
      display: flex;
      align-items: center;
      justify-content: center;
      width: 51px;
      height: 50px;
      margin-right: 11px;
      flex: none;
      box-sizing: border-box;
      border-bottom: 3px solid transparent;
    }

    .task.run {
      border-bottom-color: #a9c3ec;
    }

    .task.active {
      width: 61px;
      margin: 0 6px 0 -5px;
      background: #596469;
    }

    .acad {
      display: block;
      width: 30px;
      height: 30px;
      background: #f9dfd6;
      font: 700 30px/30px 'Liberation Sans', sans-serif;
      color: #c3202a;
      text-align: center;
    }

    .xl {
      position: relative;
      display: block;
      width: 30px;
      height: 28px;
    }

    .xl i {
      position: absolute;
      left: 6px;
      top: 0;
      width: 24px;
      height: 27px;
      background: linear-gradient(#33c481 0 33%, #21a366 33% 66%, #107c41 66%);
    }

    .xl b {
      position: absolute;
      left: 0;
      top: 7px;
      width: 15px;
      height: 15px;
      background: #127a45;
      font: 700 12px/15px 'Liberation Sans', sans-serif;
      color: #fff;
      text-align: center;
    }

    .tray-space {
      flex: 1;
    }

    .chev {
      margin-right: 11px;
      flex: none;
    }

    .qq {
      margin-right: 13px;
      flex: none;
    }

    .tray-end {
      width: 3px;
      height: 14px;
      flex: none;
      border: 1px solid #ddd;
      border-right: 0;
    }

    /* session timer bubble, floating over the ribbon */
    .timer {
      position: absolute;
      left: 1257px;
      top: 21px;
      width: 52px;
      height: 58px;
    }

    .timer svg {
      display: block;
    }

    .timer span {
      position: absolute;
      left: 0;
      top: 16px;
      width: 52px;
      font-size: 13.500px;
      line-height: 20px;
      text-align: center;
      color: #d4e9fb;
    }
  `;
}

declare global {
  interface HTMLElementTagNameMap {
    'app-root': AppRoot;
  }
}
